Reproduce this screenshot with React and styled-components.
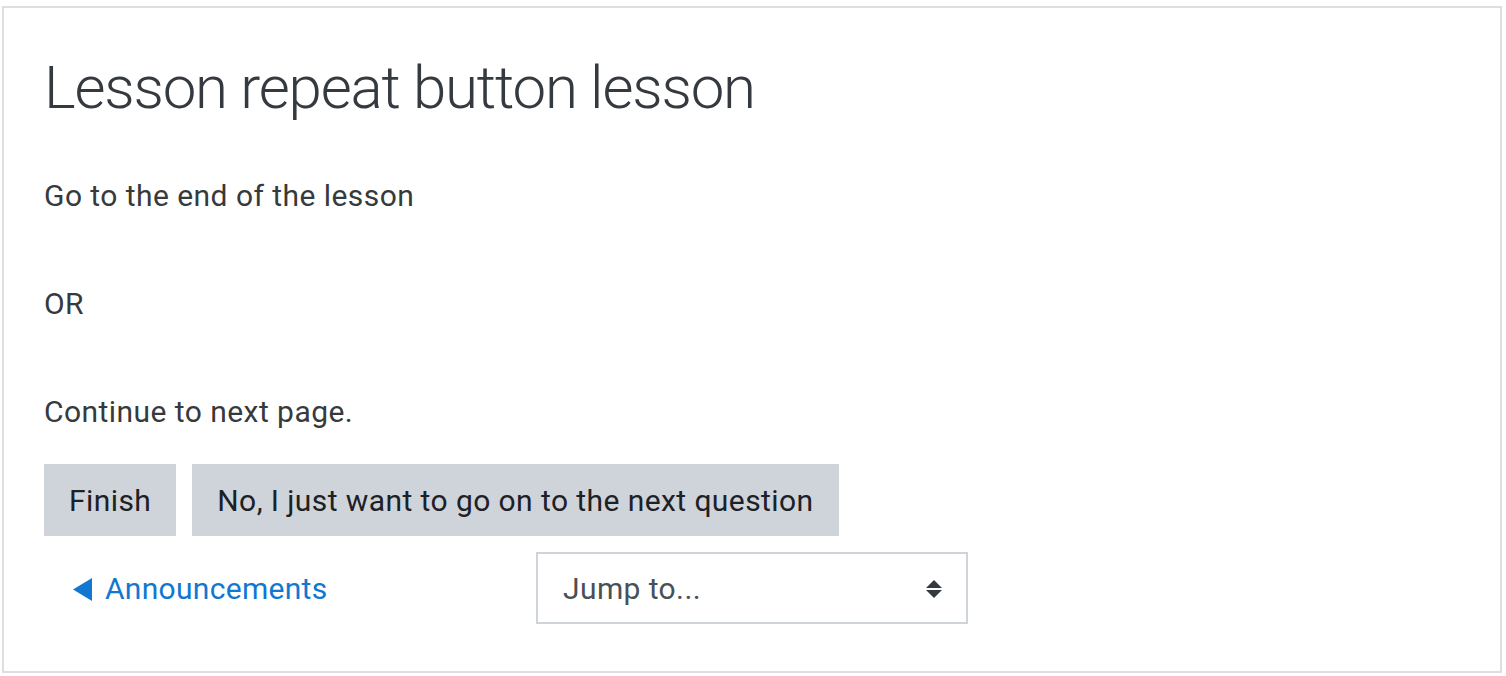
import styled, { createGlobalStyle } from "styled-components";

const GlobalStyle = createGlobalStyle`
  html, body {
    margin: 0;
    padding: 0;
    background: #fff;
  }
  body {
    font-family: Roboto, "Helvetica Neue", Arial, sans-serif;
    color: #373a3c;
  }
`;

const Page = styled.main`
  box-sizing: border-box;
  width: 1500px;
  margin: 6px 0 0 2px;
  border: 2px solid #dedede;
  padding: 44px 40px 47px 40px;
`;

const Title = styled.h2`
  margin: 0 0 49px;
  font-size: 60px;
  font-weight: 300;
  line-height: 72px;
  letter-spacing: -1.2px;
  color: #343a40;
`;

const Content = styled.div`
  display: flex;
  flex-direction: column;
  gap: 63px;
`;

const Para = styled.p`
  margin: 0;
  font-size: 30px;
  line-height: 45px;
  letter-spacing: 0.45px;
`;

const Buttons = styled.div`
  display: flex;
  gap: 16px;
  margin-top: 30px;
`;

const Button = styled.button`
  height: 72px;
  padding: 0 25px;
  border: none;
  border-radius: 0;
  background: #ced4da;
  color: #1d2125;
  font-family: inherit;
  font-size: 30px;
  line-height: 45px;
  letter-spacing: 0.42px;
  cursor: pointer;
`;

const NavRow = styled.div`
  display: flex;
  align-items: center;
  margin-top: 16px;
`;

const PrevWrap = styled.div`
  box-sizing: border-box;
  width: 492px;
  padding-left: 29px;
`;

const PrevLink = styled.a`
  display: inline-flex;
  align-items: center;
  gap: 13px;
  color: #1177d1;
  font-size: 30px;
  line-height: 45px;
  letter-spacing: 0.3px;
  text-decoration: none;

  & svg {
    width: 19px;
    height: 23px;
    margin-top: 2px;
  }
`;

const Select = styled.div`
  box-sizing: border-box;
  display: flex;
  align-items: center;
  justify-content: space-between;
  width: 432px;
  height: 72px;
  padding: 0 24px 0 25px;
  border: 2px solid #ced4da;
  color: #495057;
  font-size: 30px;
  line-height: 45px;
  letter-spacing: 0.4px;

  & svg {
    width: 16px;
    height: 18px;
    margin-top: 2px;
  }
`;

export default function App() {
  return (
    <>
      <GlobalStyle />
      <Page>
        <Title>Lesson repeat button lesson</Title>
        <Content>
          <Para>Go to the end of the lesson</Para>
          <Para>OR</Para>
          <Para>Continue to next page.</Para>
        </Content>
        <Buttons>
          <Button>Finish</Button>
          <Button>No, I just want to go on to the next question</Button>
        </Buttons>
        <NavRow>
          <PrevWrap>
            <PrevLink href="#">
              <svg viewBox="0 0 19 23">
                <polygon points="19,0 19,23 0,11.5" fill="currentColor" />
              </svg>
              Announcements
            </PrevLink>
          </PrevWrap>
          <Select>
            <span>Jump to...</span>
            <svg viewBox="0 0 16 18">
              <polygon points="8,0 16,8 0,8" fill="#343a40" />
              <polygon points="0,10 16,10 8,18" fill="#343a40" />
            </svg>
          </Select>
        </NavRow>
      </Page>
    </>
  );
}
